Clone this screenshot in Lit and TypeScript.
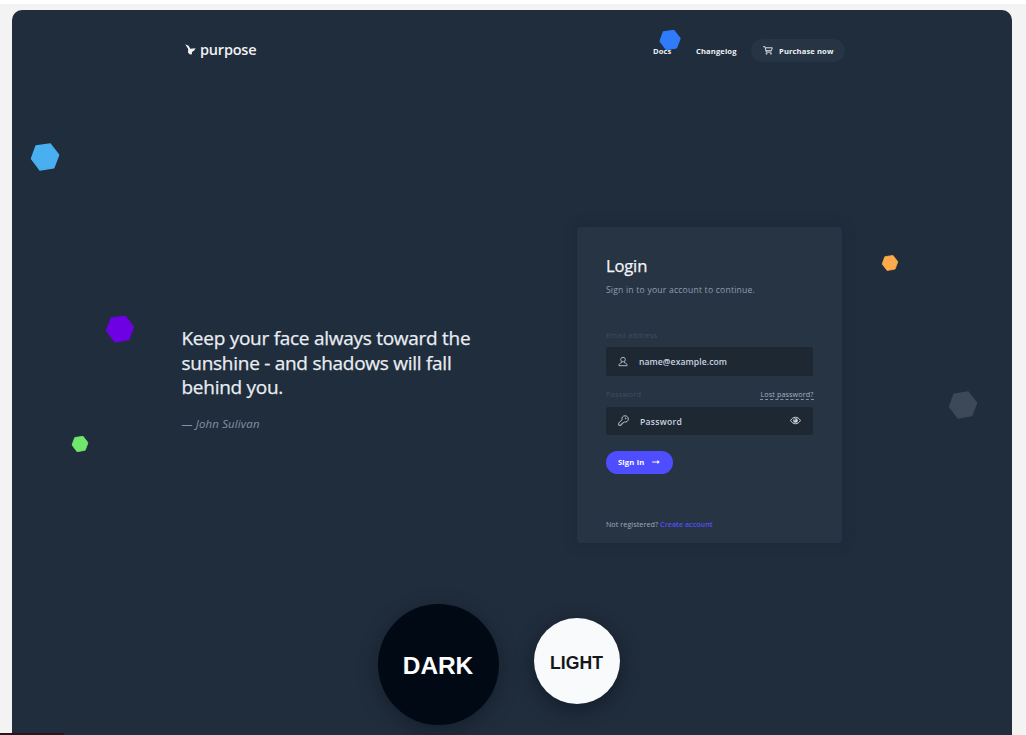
import { LitElement, html, svg, css } from "lit";
import { customElement } from "lit/decorators.js";
import { styleMap } from "lit/directives/style-map.js";

interface Shape {
  x: number;
  y: number;
  size: number;
  color: string;
}

const shapes: Shape[] = [
  { x: 670, y: 39.8, size: 21.6, color: "#2f7bfa" },
  { x: 44.8, y: 157.4, size: 29, color: "#48b0f0" },
  { x: 119.9, y: 329.2, size: 28.6, color: "#6e00e4" },
  { x: 79.6, y: 444.2, size: 17, color: "#70e66d" },
  { x: 890, y: 263.3, size: 16.6, color: "#ffab4b" },
  { x: 963.4, y: 405.1, size: 28.8, color: "#3d4858" },
];

const hexagon = svg`<path d="M-9-11 5.2-13.1 13.7-2.1 8.8 10.7-5 13.1-13.6 1.7Z" fill="currentColor" stroke="currentColor" stroke-width="1.4" stroke-linejoin="round"/>`;

@customElement("app-root")
export class AppRoot extends LitElement {
  static styles = css`
    :host {
      display: block;
      position: relative;
      box-sizing: border-box;
      height: 735px;
      overflow: hidden;
      padding: 6px 14px 0 12px;
      border-top: 4px solid #fff;
      background: #f3f3f3;
      color: #e6eaf0;
      font-family: "Open Sans", "Noto Sans", sans-serif;
    }
    svg { display: block; }
    .frame {
      height: 725px;
      box-sizing: border-box;
      border-radius: 10px 10px 0 0;
      background: #202d3c;
    }
    .header {
      display: flex;
      align-items: center;
      height: 81px;
      padding: 0 167px 0 173px;
    }
    .brand {
      display: flex;
      align-items: center;
      gap: 4px;
      margin-top: -2px;
      font: 600 14.5px/20px "Open Sans", sans-serif;
      letter-spacing: -0.2px;
      color: #f0f1f3;
      flex: 1;
    }
    .nav {
      display: flex;
      align-items: center;
      font-size: 7.6px;
      font-weight: 700;
      letter-spacing: 0.12px;
      color: #eef1f5;
      white-space: nowrap;
    }
    .docs { width: 43px; }
    .changelog { width: 55px; }
    .purchase {
      display: flex;
      align-items: center;
      box-sizing: border-box;
      width: 94px;
      height: 23px;
      padding-left: 12px;
      gap: 6px;
      border-radius: 12px;
      background: #273444;
    }
    .main {
      display: flex;
      justify-content: space-between;
      align-items: flex-start;
      height: 513px;
      padding: 0 170px 0 169.5px;
    }
    .quote {
      margin-top: 235px;
      white-space: nowrap;
    }
    .words {
      font-size: 19px;
      line-height: 24.7px;
      letter-spacing: -0.27px;
      color: #e9edf3;
      -webkit-text-stroke: 0.25px #e9edf3;
    }
    .author {
      margin-top: 15px;
      font-size: 11.4px;
      line-height: 18px;
      font-style: italic;
      letter-spacing: 0.17px;
      color: #8492a6;
    }
    .card {
      box-sizing: border-box;
      width: 264.8px;
      height: 316.5px;
      margin-top: 135.5px;
      padding: 28px 28.5px 0 28.7px;
      border-radius: 4px;
      background: #273444;
      box-shadow: 0 0 12px rgba(24, 37, 56, 0.6);
      white-space: nowrap;
    }
    .title {
      font-size: 16.6px;
      line-height: 22px;
      letter-spacing: -0.15px;
      color: #f3f5f8;
      -webkit-text-stroke: 0.25px #f3f5f8;
    }
    .sub {
      margin-top: 6px;
      font-size: 8.6px;
      line-height: 14px;
      letter-spacing: 0.21px;
      color: #8f9db0;
    }
    .label {
      display: flex;
      justify-content: space-between;
      height: 12px;
      font-size: 7.4px;
      line-height: 12px;
      letter-spacing: 0.25px;
      color: #414d5e;
    }
    .email-label { margin-top: 32px; }
    .password-label { margin-top: 12.5px; }
    .lost {
      height: 11px;
      border-bottom: 1px dashed #8492a6;
      color: #a3afbf;
      font-size: 7.2px;
      letter-spacing: 0.11px;
    }
    .field {
      display: flex;
      align-items: center;
      box-sizing: border-box;
      height: 28.5px;
      margin: 6.5px 1px 0 0.5px;
      padding: 0 11.5px 0 11.5px;
      border-radius: 2px;
      background: #1e2833;
      color: #c9d3e0;
      font-size: 8.6px;
      font-weight: 600;
      letter-spacing: 0.08px;
    }
    .value { flex: 1; padding-left: 11px; margin-top: 2px; }
    .secret { letter-spacing: 0.3px; }
    .submit {
      display: flex;
      align-items: center;
      box-sizing: border-box;
      width: 67px;
      height: 23px;
      margin-top: 15.5px;
      padding-left: 12px;
      gap: 8px;
      border-radius: 12px;
      background: #4e4dff;
      color: #fff;
      font-size: 7.6px;
      font-weight: 700;
      letter-spacing: 0.2px;
    }
    .register {
      margin-top: 44px;
      font-size: 7.2px;
      line-height: 12px;
      letter-spacing: 0.06px;
      color: #a0acbd;
    }
    .create { color: #5350f5; font-weight: 600; letter-spacing: 0; }
    .modes {
      display: flex;
      gap: 35px;
      padding-left: 365.5px;
    }
    .mode {
      display: flex;
      align-items: center;
      justify-content: center;
      border-radius: 50%;
      font-family: "Liberation Sans", Arial, sans-serif;
      font-weight: 700;
    }
    .dark {
      width: 121px;
      height: 121px;
      background: #010a14;
      color: #fff;
      font-size: 24.4px;
      box-shadow: 0 5px 20px rgba(0, 8, 20, 0.35);
    }
    .light {
      width: 86px;
      height: 86px;
      margin-top: 14px;
      background: #f9fafc;
      color: #151719;
      font-size: 17.6px;
      box-shadow: 0 5px 20px rgba(0, 8, 20, 0.45);
    }
    .caption { margin-top: 2px; }
    .light .caption { margin-top: 4px; }
    .shape {
      position: absolute;
      transform: translate(-50%, -50%);
    }
    .status {
      position: absolute;
      left: 0;
      bottom: 0;
      width: 64px;
      height: 2px;
      background: #2b1521;
    }
  `;

  render() {
    return html`
      <div class="frame">
        <div class="header">
          <div class="brand">
            <svg width="11" height="11" viewBox="0 0 11 11">
              <path d="M.2.2 3.6 1.8 5.3 4.8 10.6 4.2 9.2 6.4 7 8 6.8 10.6 4.6 10.2 3 8.4 3.2 5Z" fill="#f0f1f3" />
            </svg>
            <span>purpose</span>
          </div>
          <div class="nav">
            <span class="docs">Docs</span>
            <span class="changelog">Changelog</span>
            <div class="purchase">
              <svg width="10" height="9" viewBox="0 0 10 9" fill="none" stroke="#d9dfe7" stroke-width="1" stroke-linejoin="round">
                <path d="M.2.7H2L3.2 6.1H8.3M2.3 1.8H9.3L8.4 4.7H3" />
                <circle cx="3.6" cy="7.7" r=".55" /><circle cx="7.9" cy="7.7" r=".55" />
              </svg>
              <span>Purchase now</span>
            </div>
          </div>
        </div>
        <div class="main">
          <div class="quote">
            <div class="words">Keep your face always toward the<br />sunshine - and shadows will fall<br />behind you.</div>
            <div class="author">— John Sulivan</div>
          </div>
          <div class="card">
            <div class="title">Login</div>
            <div class="sub">Sign in to your account to continue.</div>
            <div class="label email-label"><span>Email address</span></div>
            <div class="field">
              <svg width="10" height="11" viewBox="0 0 10 11" fill="none" stroke="#a9b5c5" stroke-width="1">
                <circle cx="5" cy="3.6" r="2.3" />
                <path d="M3.7 5.8 3.4 6.9C1.7 7.2.9 8 .9 9.7H9.1C9.1 8 8.3 7.2 6.6 6.9L6.3 5.8" stroke-linejoin="round" />
              </svg>
              <span class="value">name@example.com</span>
            </div>
            <div class="label password-label"><span>Password</span><span class="lost">Lost password?</span></div>
            <div class="field">
              <svg width="11" height="11" viewBox="0 0 11 11" fill="none" stroke="#b7c2d0" stroke-width="1" stroke-linejoin="round">
                <path d="M4.1 4.7C3.4 2.6 4.8.8 7 .8 8.9.8 10.3 2.2 10.3 4 10.3 6.2 8.4 7.6 6.3 6.9L5.3 8H4.2V9.2H3.1V10.3H.7V8.1Z" />
                <circle cx="7.7" cy="3.3" r=".45" />
              </svg>
              <span class="value secret">Password</span>
              <svg width="11" height="9" viewBox="0 0 11 9" fill="none" stroke="#cdd5df" stroke-width="1">
                <path d="M.6 4.5C2.9.2 8.1.2 10.4 4.5 8.1 8.8 2.9 8.8.6 4.5Z" />
                <circle cx="5.5" cy="4.5" r="2.3" fill="#cdd5df" stroke="none" />
                <circle cx="4.8" cy="3.8" r=".7" fill="#1e2833" stroke="none" />
              </svg>
            </div>
            <div class="submit">
              <span>Sign in</span>
              <svg width="8" height="6" viewBox="0 0 8 6" fill="#fff">
                <path d="M.2 2.5H5.4V1.1L7.8 3 5.4 4.9V3.5H.2Z" />
              </svg>
            </div>
            <div class="register">Not registered? <span class="create">Create account</span></div>
          </div>
        </div>
        <div class="modes">
          <div class="mode dark"><span class="caption">DARK</span></div>
          <div class="mode light"><span class="caption">LIGHT</span></div>
        </div>
      </div>
      ${shapes.map(
        (s) => html`<svg
          class="shape"
          viewBox="-14.5 -14.5 29 29"
          style=${styleMap({ left: `${s.x}px`, top: `${s.y - 4}px`, width: `${s.size}px`, height: `${s.size}px`, color: s.color })}
        >${hexagon}</svg>`
      )}
      <div class="status"></div>
    `;
  }
}
